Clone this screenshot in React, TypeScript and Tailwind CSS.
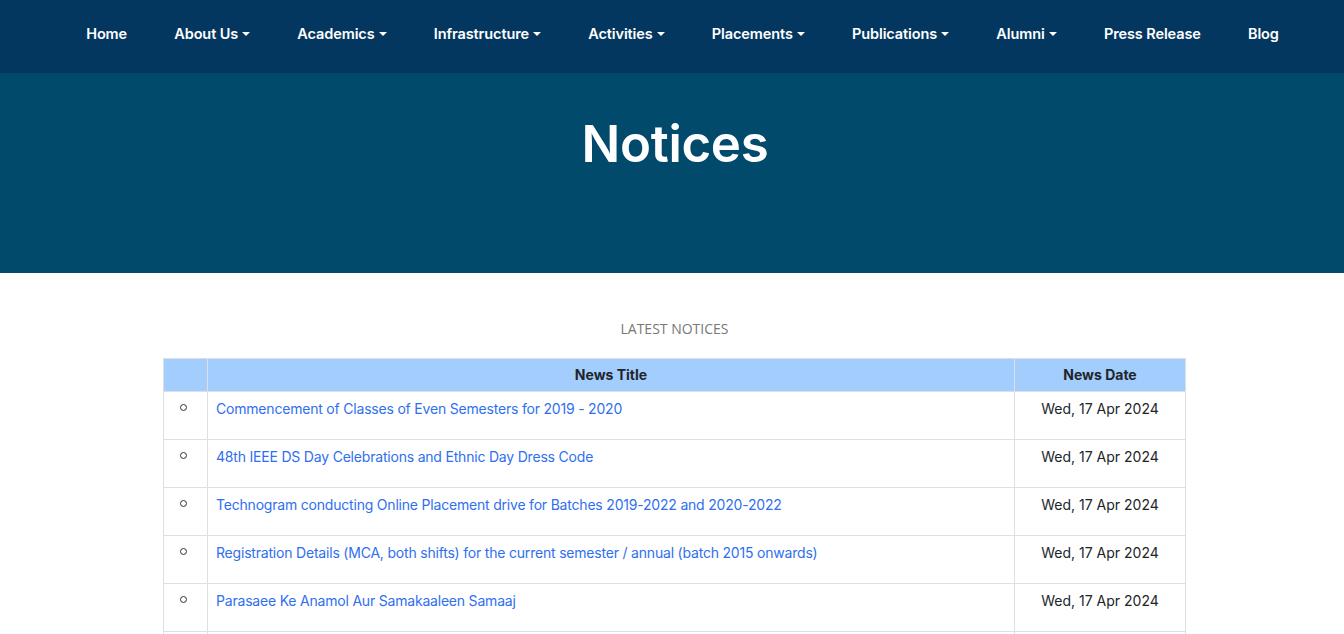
const navItems = [
  { label: "Home", drop: false },
  { label: "About Us", drop: true },
  { label: "Academics", drop: true },
  { label: "Infrastructure", drop: true },
  { label: "Activities", drop: true },
  { label: "Placements", drop: true },
  { label: "Publications", drop: true },
  { label: "Alumni", drop: true },
  { label: "Press Release", drop: false },
  { label: "Blog", drop: false },
];

const notices = [
  "Commencement of Classes of Even Semesters for 2019 - 2020",
  "48th IEEE DS Day Celebrations and Ethnic Day Dress Code",
  "Technogram conducting Online Placement drive for Batches 2019-2022 and 2020-2022",
  "Registration Details (MCA, both shifts) for the current semester / annual (batch 2015 onwards)",
  "Parasaee Ke Anamol Aur Samakaaleen Samaaj",
  "Admission Notice for the session 2024-2025",
];

function Caret() {
  return (
    <span className="ml-[4px] inline-block w-0 h-0 border-l-[4px] border-r-[4px] border-t-[4px] border-l-transparent border-r-transparent border-t-white" />
  );
}

export default function App() {
  return (
    <div className="min-h-screen bg-white font-['Inter',sans-serif]">
      <nav className="h-[73px] bg-[#04375f] flex items-center justify-center pl-[21px] pb-[6px]">
        {navItems.map((item) => (
          <a
            key={item.label}
            href="#"
            className="px-[23.6px] text-[14.5px] font-semibold text-white flex items-center tracking-[-0.1px]"
          >
            {item.label}
            {item.drop && <Caret />}
          </a>
        ))}
      </nav>

      <header className="h-[200px] bg-[#024a6b] flex justify-center pt-[36px] pl-[6px]">
        <h1 className="text-[51px] font-semibold text-white leading-[70px] tracking-[-0.3px]">
          Notices
        </h1>
      </header>

      <section className="pt-[45px] pl-[163px]">
        <h2 className="w-[1023px] text-center text-[14px] uppercase text-[#777] font-['Open_Sans',sans-serif] mb-[19px]">
          Latest Notices
        </h2>
        <table className="w-[1023px] border-collapse text-[14px]">
          <thead>
            <tr className="bg-[#a2cdfd] h-[33px]">
              <th className="w-[44px] border border-[#dcdfe5]" />
              <th className="border border-[#dcdfe5] font-bold text-[#212529] text-center pb-[1px]">
                News Title
              </th>
              <th className="w-[171px] border border-[#dcdfe5] font-bold text-[#212529] text-center pb-[1px]">
                News Date
              </th>
            </tr>
          </thead>
          <tbody>
            {notices.map((n) => (
              <tr key={n} className="h-[48px] align-top">
                <td className="border border-[#dcdfe5] text-center pt-[12px] pr-[4px]">
                  <span className="inline-block w-[7px] h-[7px] rounded-full border border-[#333] align-top" />
                </td>
                <td className="border border-[#dcdfe5] px-[8px] pt-[6px]">
                  <a href="#" className="text-[#2f6ff0] tracking-[-0.2px]">
                    {n}
                  </a>
                </td>
                <td className="border border-[#dcdfe5] text-center pt-[6px] text-[#212529]">
                  Wed, 17 Apr 2024
                </td>
              </tr>
            ))}
          </tbody>
        </table>
      </section>
    </div>
  );
}
